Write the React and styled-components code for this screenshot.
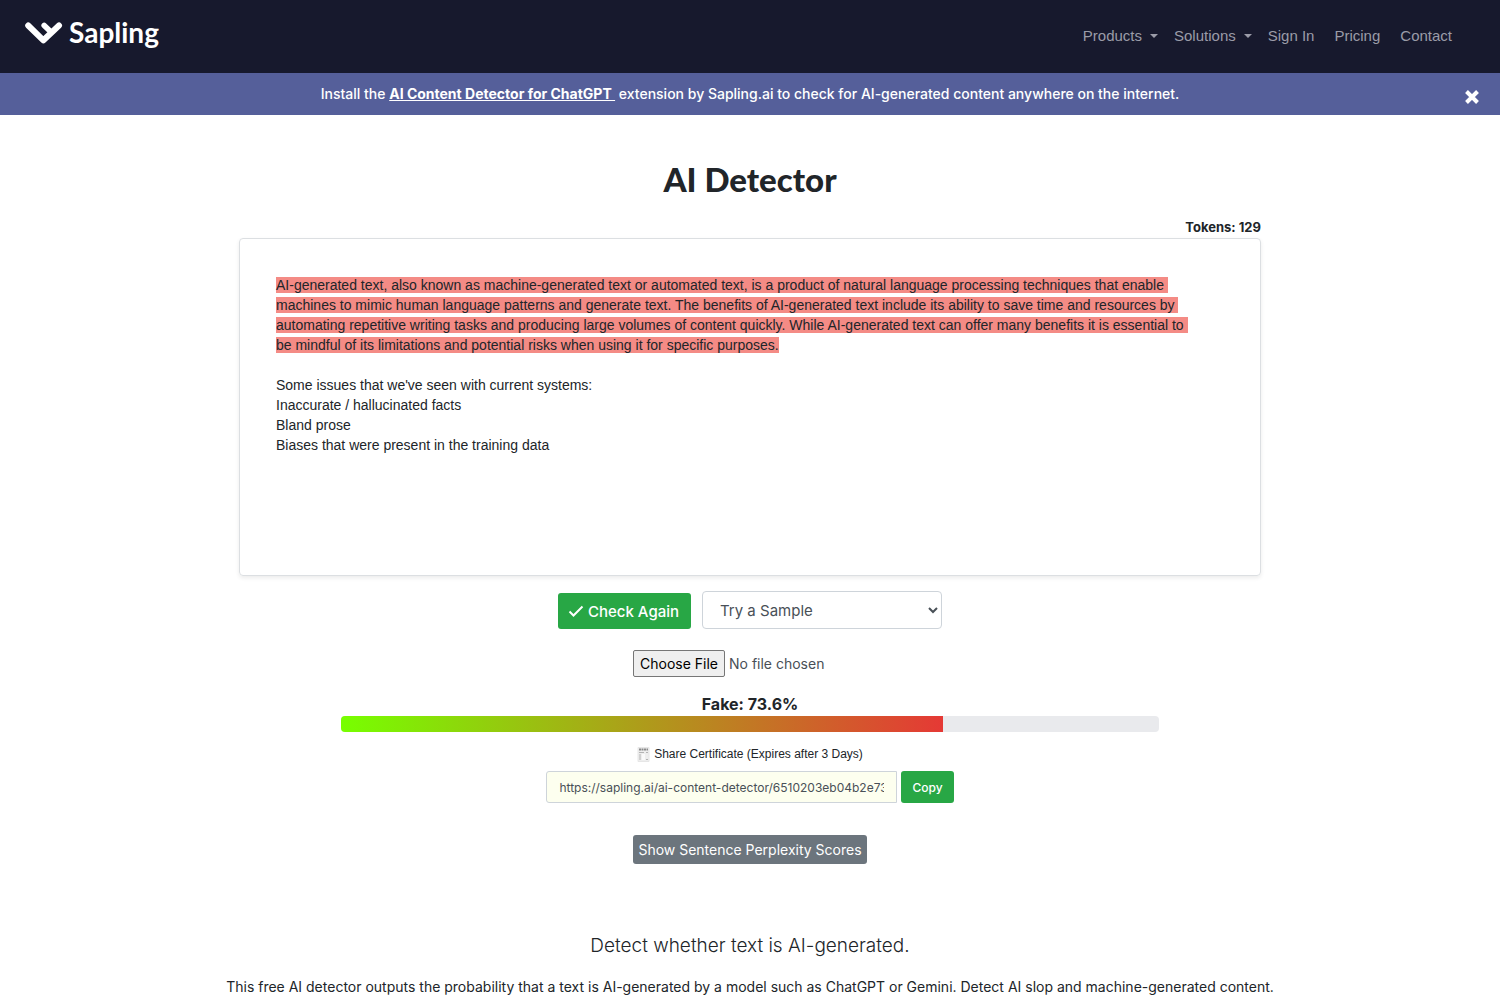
import { useState } from "react"
import styled, { createGlobalStyle } from "styled-components"

const colors = {
    navy: "#17192d",
    indigo: "#555f9a",
    dark: "#212529",
    field: "#495057",
    border: "#ced4da",
    green: "#28a745",
    grey: "#6c757d",
    highlight: "#f48b85",
}

const GlobalStyle = createGlobalStyle`
    * {
        box-sizing: border-box;
    }
    body {
        margin: 0;
        background-color: #ffffff;
        color: ${colors.dark};
        font-family: Inter, "Liberation Sans", sans-serif;
        font-size: 16px;
        line-height: 24px;
    }
    button, input, select {
        font-family: inherit;
    }
`

// Navigation
const Navbar = styled.nav`
    display: flex;
    justify-content: space-between;
    align-items: center;
    height: 73px;
    padding: 0 40px 2px 24px;
    background-color: ${colors.navy};
`
const Brand = styled.a`
    display: flex;
    align-items: center;
    gap: 6px;
    padding-bottom: 8px;
    color: #ffffff;
    font-family: Lato, sans-serif;
    font-size: 28px;
    font-weight: 700;
    line-height: 32px;
    text-decoration: none;
`
const NavList = styled.ul`
    display: flex;
    gap: 4px;
    margin: 0;
    padding: 0;
    list-style: none;
`
const NavLink = styled.a`
    display: flex;
    align-items: center;
    gap: 8px;
    padding: 0 ${({ $menu }) => ($menu ? "4px" : "8px")} 0 8px;
    color: #9b9ca8;
    font-family: "Liberation Sans", sans-serif;
    font-size: 15px;
    text-decoration: none;
`
const Caret = styled.span`
    border-top: 4px solid currentColor;
    border-left: 4px solid transparent;
    border-right: 4px solid transparent;
`

// Announcement under the navigation
const Banner = styled.div`
    display: flex;
    align-items: center;
    height: 42px;
    padding: 0 20px;
    background-color: ${colors.indigo};
    color: #ffffff;
    font-size: 14px;
    font-weight: 500;
`
const BannerText = styled.p`
    flex: 1;
    margin: 0;
    padding-left: 16px;
    text-align: center;
`
const BannerLink = styled.a`
    color: inherit;
    font-weight: 700;
    white-space: pre;
`
const CloseButton = styled.button`
    display: flex;
    padding: 6px 0 0;
    border: 0;
    background: none;
    color: #ffffff;
    cursor: pointer;
`

// Detector
const Main = styled.main`
    display: flex;
    flex-direction: column;
    align-items: center;
    padding: 43px 16px 0;
`
const Title = styled.h1`
    margin: 0 0 16px;
    font-family: Lato, sans-serif;
    font-size: 33px;
    font-weight: 900;
    line-height: 43px;
`
const Detector = styled.section`
    display: flex;
    flex-direction: column;
    align-items: center;
    width: 100%;
    max-width: 1022px;
`
const Tokens = styled.div`
    align-self: flex-end;
    margin-bottom: 1px;
    font-size: 13px;
    font-weight: 700;
    line-height: 20px;
`
const Editor = styled.div`
    width: 100%;
    min-height: 338px;
    padding: 36px;
    border: 1px solid #dcdfe2;
    border-radius: 4px;
    box-shadow: 0 2px 4px rgba(0, 0, 0, 0.08);
    font-family: "Liberation Sans", sans-serif;
    font-size: 14px;
    line-height: 20px;
    outline: none;
`
const Paragraph = styled.p`
    margin: 0 0 20px;
`
const Flagged = styled.mark`
    background-color: ${colors.highlight};
    color: inherit;
`
const Actions = styled.div`
    display: flex;
    align-items: flex-end;
    gap: 11px;
    margin: 15px 0 21px;
`
const Button = styled.button`
    display: inline-flex;
    align-items: center;
    justify-content: center;
    gap: 4px;
    border: 0;
    border-radius: 3px;
    background-color: ${({ $color }) => $color};
    color: #ffffff;
    cursor: pointer;
`
const CheckButton = styled(Button)`
    height: 36px;
    padding: 0 12px 0 10px;
    font-size: 15px;
    font-weight: 500;
`
const SampleSelect = styled.select`
    width: 240px;
    height: 38px;
    padding: 6px 0 6px 13px;
    border: 1px solid ${colors.border};
    border-radius: 4px;
    background-color: #ffffff;
    color: ${colors.field};
    font-size: 15px;
`
const FileInput = styled.input`
    width: 234px;
    color: ${colors.field};
    font-size: 14px;
    line-height: 20px;
    &::file-selector-button {
        height: 27px;
        margin-right: 4px;
        padding: 0 6px;
        border: 1px solid #767676;
        border-radius: 2px;
        background-color: #efefef;
        color: #000000;
        font-family: inherit;
        font-size: 14px;
    }
`
const Score = styled.div`
    margin-top: 15px;
    font-weight: 700;
`
const Track = styled.div`
    width: 80%;
    height: 16px;
    overflow: hidden;
    border-radius: 4px;
    background-color: #e9eaed;
`
const Fill = styled.div`
    height: 100%;
    background: linear-gradient(to right, #77ff00, #e53935);
`
const ShareLabel = styled.label`
    display: flex;
    align-items: center;
    gap: 4px;
    margin: 12px 0 7px;
    font-family: "Liberation Sans", sans-serif;
    font-size: 12px;
    line-height: 20px;
`
const ShareRow = styled.div`
    display: flex;
    gap: 4px;
`
const ShareInput = styled.input`
    width: 351px;
    height: 32px;
    padding: 4px 12px;
    border: 1px solid ${colors.border};
    border-radius: 3px 0 0 3px;
    background-color: #fdffef;
    color: ${colors.field};
    font-size: 12px;
`
const CopyButton = styled(Button)`
    padding: 0 11px;
    font-size: 12px;
    font-weight: 500;
`
const ScoresButton = styled(Button)`
    height: 29px;
    margin-top: 32px;
    padding: 0 5px;
    font-size: 14px;
`

// Introduction
const Tagline = styled.h2`
    margin: 67px 0 14px;
    font-size: 19px;
    font-weight: 300;
    line-height: 30px;
`
const Intro = styled.p`
    margin: 0;
    font-size: 14px;
    text-align: center;
`

const links = [
    { label: "Products", menu: true },
    { label: "Solutions", menu: true },
    { label: "Sign In" },
    { label: "Pricing" },
    { label: "Contact" },
]

function Logo() {
    return (
        <svg width="39" height="26" viewBox="0 0 39 26" fill="none" stroke="#ffffff" strokeLinecap="round" strokeLinejoin="round" aria-hidden="true">
            <path d="M4.2 6.5 19.4 21.3 35 6.5" strokeWidth="6" />
            <path d="M20.2 6.5 26.5 12.5" strokeWidth="5.6" />
        </svg>
    )
}

function NewspaperIcon() {
    return (
        <svg width="13" height="15" viewBox="0 0 13 15" aria-hidden="true">
            <path d="M1 .5h11v14H1z" fill="#eeeeee" stroke="#e6e6e6" />
            <path d="M2 2.5h9" stroke="#8a8a8a" strokeWidth="2" strokeDasharray="2 .5" />
            <path d="M2 5.5h5M9 5.5h2M2 8h2M2 10h2M2 12h2M9 12.5h2" stroke="#b4b4b4" />
            <path d="M5 7h3v6H5z" fill="#fafafa" />
        </svg>
    )
}

function App() {
    const [showBanner, setShowBanner] = useState(true)
    const score = 73.6

    return (
        <>
            <GlobalStyle />
            <Navbar>
                <Brand href="#">
                    <Logo />
                    Sapling
                </Brand>
                <NavList>
                    {links.map(({ label, menu }) => (
                        <li key={label}>
                            <NavLink href="#" $menu={menu}>
                                {label}
                                {menu && <Caret />}
                            </NavLink>
                        </li>
                    ))}
                </NavList>
            </Navbar>
            {showBanner &&
                <Banner>
                    <BannerText>
                        Install the <BannerLink href="#">{"AI Content Detector for ChatGPT "}</BannerLink> extension by Sapling.ai to check for AI-generated content anywhere on the internet.
                    </BannerText>
                    <CloseButton type="button" aria-label="Close" onClick={() => setShowBanner(false)}>
                        <svg width="16" height="16" viewBox="0 0 16 16" fill="none" stroke="currentColor" strokeWidth="4">
                            <path d="m2.5 2.5 11 11M13.5 2.5l-11 11" />
                        </svg>
                    </CloseButton>
                </Banner>
            }
            <Main>
                <Title>AI Detector</Title>
                <Detector>
                    <Tokens>Tokens: 129</Tokens>
                    <Editor contentEditable suppressContentEditableWarning role="textbox" aria-multiline="true" aria-label="Text to check" spellCheck={false}>
                        <Paragraph>
                            <Flagged>
                                AI-generated text, also known as machine-generated text or automated text, is a product of natural language processing techniques that enable&nbsp;<br />
                                machines to mimic human language patterns and generate text. The benefits of AI-generated text include its ability to save time and resources by&nbsp;<br />
                                automating repetitive writing tasks and producing large volumes of content quickly. While AI-generated text can offer many benefits it is essential to&nbsp;<br />
                                be mindful of its limitations and potential risks when using it for specific purposes.
                            </Flagged>
                        </Paragraph>
                        <Paragraph>
                            Some issues that we've seen with current systems:<br />
                            Inaccurate / hallucinated facts<br />
                            Bland prose<br />
                            Biases that were present in the training data
                        </Paragraph>
                    </Editor>
                    <Actions>
                        <CheckButton type="button" $color={colors.green}>
                            <svg width="16" height="16" viewBox="0 0 16 16" fill="none" stroke="currentColor" strokeWidth="2" aria-hidden="true">
                                <path d="m1.5 8.5 4 4 9-9" />
                            </svg>
                            Check Again
                        </CheckButton>
                        <SampleSelect aria-label="Try a Sample">
                            <option>Try a Sample</option>
                        </SampleSelect>
                    </Actions>
                    <FileInput type="file" aria-label="Upload a file" />
                    <Score>Fake: {score}%</Score>
                    <Track>
                        <Fill style={{ width: `${score}%` }} />
                    </Track>
                    <ShareLabel htmlFor="share-link">
                        <NewspaperIcon />
                        Share Certificate (Expires after 3 Days)
                    </ShareLabel>
                    <ShareRow>
                        <ShareInput id="share-link" readOnly value="https://sapling.ai/ai-content-detector/6510203eb04b2e73" />
                        <CopyButton type="button" $color={colors.green}>Copy</CopyButton>
                    </ShareRow>
                    <ScoresButton type="button" $color={colors.grey}>Show Sentence Perplexity Scores</ScoresButton>
                </Detector>
                <Tagline>Detect whether text is AI-generated.</Tagline>
                <Intro>This free AI detector outputs the probability that a text is AI-generated by a model such as ChatGPT or Gemini. Detect AI slop and machine-generated content.</Intro>
            </Main>
        </>
    )
}

export default App
